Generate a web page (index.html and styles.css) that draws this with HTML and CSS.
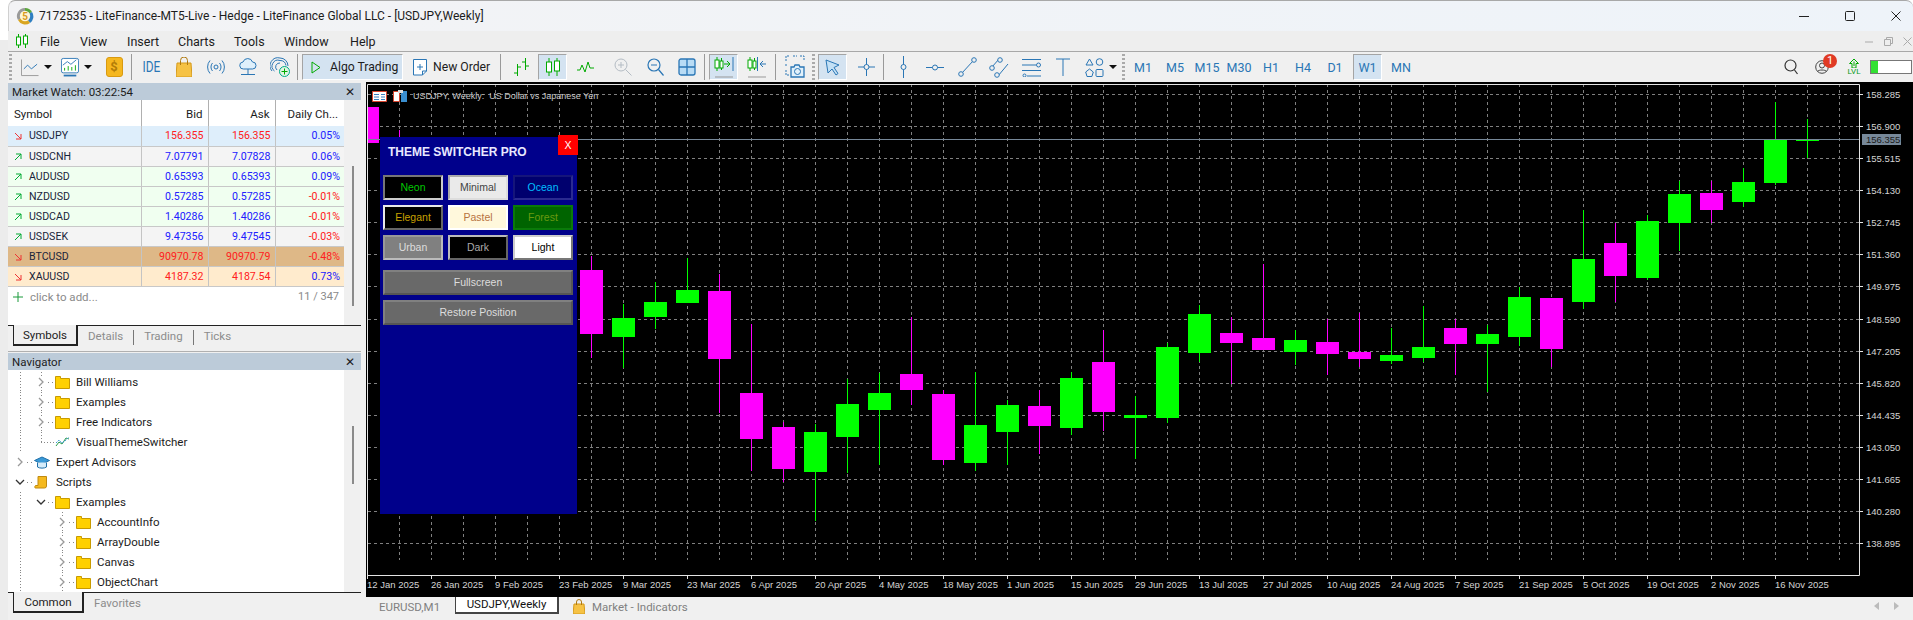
FILE: index.html
```html
<!DOCTYPE html>
<html lang="en">
<head>
    <meta charset="UTF-8">
    <meta name="viewport" content="width=device-width, initial-scale=1.0">
    <title>7172535 - LiteFinance-MT5-Live</title>
    <link rel="stylesheet" href="styles.css">
</head>
<body>
<div class="window">
    <!-- title bar -->
    <div class="titlebar">
        <svg class="logo" width="18" height="18" viewBox="0 0 18 18">
            <path d="M9 1a8 8 0 0 1 7 4L9 9z" fill="#5aa63c"/>
            <path d="M16 5a8 8 0 0 1-2 11L9 9z" fill="#2f7fc1"/>
            <path d="M14 16a8 8 0 0 1-12-3L9 9z" fill="#d9a520"/>
            <path d="M2 13A8 8 0 0 1 9 1v8z" fill="#9a9a9a"/>
            <circle cx="9" cy="9" r="5.2" fill="#fff6d8"/>
            <text x="9" y="12.5" text-anchor="middle" class="logo-five">5</text>
        </svg>
        <span class="title-text">7172535 - LiteFinance-MT5-Live - Hedge - LiteFinance Global LLC - [USDJPY,Weekly]</span>
        <div class="win-btns">
            <svg width="12" height="12" viewBox="0 0 12 12"><path d="M1 6.5h10" stroke="#222" fill="none"/></svg>
            <svg width="12" height="12" viewBox="0 0 12 12"><rect x="1.5" y="1.5" width="9" height="9" rx="1" stroke="#222" fill="none"/></svg>
            <svg width="12" height="12" viewBox="0 0 12 12"><path d="M1.5 1.5l9 9M10.5 1.5l-9 9" stroke="#222" fill="none"/></svg>
        </div>
    </div>

    <!-- menu bar -->
    <div class="menubar">
        <svg class="menu-icon" width="12" height="14" viewBox="0 0 12 14"><path d="M2.5 0v14M9.5 0v14" stroke="#0a0" fill="none"/><rect x=".5" y="3" width="4" height="8" fill="#fff" stroke="#0a0"/><rect x="7.5" y="2" width="4" height="8" fill="#fff" stroke="#0a0"/></svg>
        <span class="menu-item file">File</span>
        <span class="menu-item view">View</span>
        <span class="menu-item insert">Insert</span>
        <span class="menu-item charts">Charts</span>
        <span class="menu-item tools">Tools</span>
        <span class="menu-item win">Window</span>
        <span class="menu-item help">Help</span>
        <div class="child-btns">
            <svg width="9" height="9" viewBox="0 0 9 9"><path d="M0 5h8" stroke="#aaa" fill="none"/></svg>
            <svg width="9" height="9" viewBox="0 0 9 9"><path d="M.5 2.5h6v6h-6zM2.5 2.5v-2h6v6h-2" stroke="#aaa" fill="none"/></svg>
            <svg width="9" height="9" viewBox="0 0 9 9"><path d="M.5.5l8 8M8.5.5l-8 8" stroke="#aaa" fill="none"/></svg>
        </div>
    </div>

    <!-- toolbar -->
    <div class="toolbar">
        <div class="grip ml1"></div>
        <div class="tool dd ml8">
            <svg width="19" height="19" viewBox="0 0 19 19"><path d="M.5 1v17h18" stroke="#999" fill="none"/><path d="M3 11l4-4 4 4 6-5" stroke="#2a76b5" fill="none"/></svg>
            <i class="caret"></i>
        </div>
        <div class="tool dd ml8">
            <svg width="20" height="22" viewBox="0 0 20 22"><rect x=".5" y="1.5" width="19" height="16" rx="2" fill="#fff" stroke="#2a76b5"/><path d="M2 9l5-4 4 3 6-5" stroke="#2a76b5" fill="none"/><path d="M4 15v-3M8 15v-5M12 15v-4M16 15v-6" stroke="#0a0" fill="none"/><path d="M3 20.5h14" stroke="#2a76b5" stroke-width="2" fill="none"/></svg>
            <i class="caret"></i>
        </div>
        <div class="tool ml6">
            <div class="dollar">$</div>
        </div>
        <div class="sep ml1"></div>
        <div class="tool ml3"><span class="ide">IDE</span></div>
        <div class="tool ml1">
            <svg width="16" height="20" viewBox="0 0 16 20"><path d="M1 6h14l1 14H0z" fill="#f6c244" stroke="#d59a1c"/><path d="M4.5 8V3.5a3.5 3.5 0 0 1 7 0V8" stroke="#b07a10" fill="none"/></svg>
        </div>
        <div class="tool">
            <svg width="18" height="16" viewBox="0 0 18 16" fill="none" stroke="#2a76b5"><circle cx="9" cy="8" r="2"/><path d="M5.5 4a6 6 0 0 0 0 8M12.5 4a6 6 0 0 1 0 8M3 1.5a10 10 0 0 0 0 13M15 1.5a10 10 0 0 1 0 13"/></svg>
        </div>
        <div class="tool">
            <svg width="18" height="18" viewBox="0 0 18 18" fill="none" stroke="#2a76b5"><path d="M4.5 11a3.5 3.5 0 0 1-.5-7 5 5 0 0 1 9.5 0 3.5 3.5 0 0 1 0 7z" fill="#dff0fb"/><path d="M9 11v5M2 16.5h14"/></svg>
        </div>
        <div class="tool">
            <svg width="20" height="20" viewBox="0 0 20 20" fill="none" stroke="#2a76b5"><path d="M2 14a8 8 0 0 1 8-13 8 8 0 0 1 8 8M4.5 14a6 6 0 0 1 5.5-10.5 6 6 0 0 1 6 5M7 13a4 4 0 0 1 3-7"/><circle cx="14.5" cy="14.5" r="5" fill="#dff5e3" stroke="#0a8"/><path d="M14.5 11.5v6M11.5 14.5h6" stroke="#0a0"/></svg>
        </div>
        <div class="sep ml1"></div>
        <div class="algo ml4 active">
            <svg width="10" height="13" viewBox="0 0 10 13"><path d="M1 1l8 5.5-8 5.5z" fill="none" stroke="#0a0"/></svg>
            <span>Algo Trading</span>
        </div>
        <div class="new-order ml6">
            <svg width="14" height="18" viewBox="0 0 14 18" fill="none" stroke="#2a76b5"><path d="M.5 1.5h13V13l-4 4h-9z" fill="#fff"/><path d="M7 6v6M4 9h6"/><path d="M9.5 17v-4h4"/></svg>
            <span>New Order</span>
        </div>
        <div class="sep ml6"></div>
        <div class="tool ml4">
            <svg width="17" height="18" viewBox="0 0 17 18" fill="none" stroke="#0a0"><path d="M4.5 6v12M1 15h3.5M4.5 9H8M12.5 0v12M9 4h3.5M12.5 8H16"/></svg>
        </div>
        <div class="tool narrow ml1 active">
            <svg width="14" height="18" viewBox="0 0 14 18" fill="none" stroke="#0a0"><path d="M3 0v18M11 0v18"/><rect x=".5" y="4" width="5" height="10" fill="#fff"/><rect x="8.5" y="3" width="5" height="10" fill="#fff"/></svg>
        </div>
        <div class="tool ml2">
            <svg width="17" height="12" viewBox="0 0 17 12" fill="none" stroke="#0a0"><path d="M0 9h3l2-5 3 7 3-10 2 6h4"/></svg>
        </div>
        <div class="tool ml6">
            <svg width="18" height="18" viewBox="0 0 18 18" fill="none" stroke="#b4bcc4"><circle cx="7" cy="7" r="6"/><path d="M4 7h6M7 4v6M11.5 11.5l6 6"/></svg>
        </div>
        <div class="tool">
            <svg width="17" height="18" viewBox="0 0 17 18" fill="none" stroke="#2a76b5" stroke-width="1.2"><circle cx="7" cy="7" r="6"/><path d="M4 7h6M11.5 11.5l5 6"/></svg>
        </div>
        <div class="tool">
            <svg width="18" height="18" viewBox="0 0 18 18" fill="#b9dcf5" stroke="#2a76b5" stroke-width="1.3"><rect x="1" y="1" width="16" height="16" rx="2"/><path d="M9 1v16M1 9h16" fill="none"/></svg>
        </div>
        <div class="sep ml1"></div>
        <div class="tool narrow ml4 active">
            <svg width="20" height="24" viewBox="0 0 20 24" fill="none"><path d="M3 2v14M7.5 3v12" stroke="#0a0"/><rect x="1" y="5" width="4" height="8" fill="#fff" stroke="#0a0"/><rect x="6" y="6" width="3" height="7" fill="#fff" stroke="#0a0"/><path d="M10 9h6m-3-3l3 3-3 3" stroke="#0a0"/><path d="M19 2v14" stroke="#2a76b5"/><path d="M1 22h18" stroke="#999"/></svg>
        </div>
        <div class="tool ml3">
            <svg width="20" height="24" viewBox="0 0 20 24" fill="none"><path d="M3 2v14M7.5 3v12" stroke="#0a0"/><rect x="1" y="5" width="4" height="8" fill="#fff" stroke="#0a0"/><rect x="6" y="6" width="3" height="7" fill="#fff" stroke="#0a0"/><path d="M10.5 2v14" stroke="#2a76b5"/><path d="M19 9h-6m3-3l-3 3 3 3" stroke="#2a76b5"/><path d="M1 22h18" stroke="#999"/></svg>
        </div>
        <div class="sep ml2"></div>
        <div class="tool ml3">
            <svg width="20" height="24" viewBox="0 0 20 24" fill="none" stroke="#2a76b5"><path d="M1 6V1h4M8 1h4M15 1h4v5M1 9v3M1 15v5h4" stroke-dasharray="2 1"/><path d="M6 12h3l1-2h4l1 2h4v10H6z" fill="#e2f1fb" stroke-width="1.3"/><circle cx="12.5" cy="16.5" r="3"/></svg>
        </div>
        <div class="grip ml1"></div>
        <div class="tool narrow ml3 active">
            <svg width="15" height="17" viewBox="0 0 15 17"><path d="M1 1l13 5-5 2.5 4 6-2 1.5-4-6L3 14z" fill="#c3e0f5" stroke="#2a76b5"/></svg>
        </div>
        <div class="tool ml3">
            <svg width="17" height="18" viewBox="0 0 17 18" fill="none" stroke="#2a76b5"><path d="M8.5 0v18M0 9h17"/><circle cx="8.5" cy="9" r="2.5" fill="#f0f0f0"/></svg>
        </div>
        <div class="sep ml1"></div>
        <div class="tool ml3">
            <svg width="7" height="22" viewBox="0 0 7 22" fill="none" stroke="#2a76b5"><path d="M3.5 0v22"/><circle cx="3.5" cy="11" r="2.5" fill="#f0f0f0"/></svg>
        </div>
        <div class="tool">
            <svg width="18" height="7" viewBox="0 0 18 7" fill="none" stroke="#2a76b5"><path d="M0 3.5h18"/><circle cx="9" cy="3.5" r="2.5" fill="#f0f0f0"/></svg>
        </div>
        <div class="tool">
            <svg width="19" height="20" viewBox="0 0 19 20" fill="none" stroke="#2a76b5"><path d="M4 16L15 4"/><circle cx="3" cy="17" r="2.3" fill="#f0f0f0"/><circle cx="16" cy="3" r="2.3" fill="#f0f0f0"/></svg>
        </div>
        <div class="tool">
            <svg width="20" height="21" viewBox="0 0 20 21" fill="none" stroke="#2a76b5"><path d="M3 10L10 2M9 19l10-12"/><circle cx="3" cy="11" r="2.3" fill="#f0f0f0"/><circle cx="11" cy="3" r="2.3" fill="#f0f0f0"/><circle cx="8" cy="18" r="2.3" fill="#f0f0f0"/></svg>
        </div>
        <div class="tool">
            <svg width="19" height="19" viewBox="0 0 19 19" fill="none" stroke="#2a76b5"><path d="M0 1.5h19M0 7h14M0 12.5h19M5 18h14"/><circle cx="16.5" cy="7" r="2" fill="#f0f0f0"/><circle cx="2.5" cy="17.5" r="1.5" fill="#f0f0f0"/></svg>
        </div>
        <div class="tool">
            <svg width="14" height="18" viewBox="0 0 14 18" fill="none" stroke="#2a76b5"><path d="M0 1h14M7 1v17"/></svg>
        </div>
        <div class="tool dd wide ml3">
            <svg width="19" height="19" viewBox="0 0 19 19" fill="none" stroke="#2a76b5"><path d="M4.5 1L8 7H1z"/><circle cx="14.5" cy="4" r="3.3"/><path d="M4.5 11l3.8 3-1.4 4.5H2L.7 14z"/><rect x="11" y="11.5" width="7" height="7" rx="1"/></svg>
            <i class="caret"></i>
        </div>
        <div class="grip ml2"></div>
        <div class="tf ml2">M1</div>
        <div class="tf">M5</div>
        <div class="tf">M15</div>
        <div class="tf">M30</div>
        <div class="tf">H1</div>
        <div class="tf">H4</div>
        <div class="tf">D1</div>
        <div class="tf narrow ml2 active">W1</div>
        <div class="tf ml3">MN</div>
        <div class="tb-spacer"></div>
        <div class="tool search">
            <svg width="14" height="16" viewBox="0 0 14 16" fill="none" stroke="#333" stroke-width="1.2"><circle cx="6.5" cy="6.5" r="5.5"/><path d="M10.5 11l3 4"/></svg>
        </div>
        <div class="tool profile">
            <svg width="14" height="14" viewBox="0 0 14 14" fill="none" stroke="#444"><circle cx="7" cy="7" r="6.3"/><circle cx="7" cy="5.5" r="2.5"/><path d="M2.5 11.5c1-2 8-2 9 0"/></svg>
            <span class="badge">1</span>
        </div>
        <div class="tool lvl">
            <svg width="10" height="9" viewBox="0 0 10 9"><path d="M5 0l4.5 4.5H7V9H3V4.5H.5z" fill="none" stroke="#0a0"/><path d="M5 2.5V7" stroke="#0a0"/></svg>
            <span>LVL</span>
        </div>
        <div class="signal-bar"><i></i></div>
    </div>

    <div class="main">
        <!-- left docks -->
        <div class="sidebar">
            <div class="dock watch">
                <div class="dock-head"><span>Market Watch: 03:22:54</span><b class="dock-x">✕</b></div>
                <div class="dock-body">
                    <div class="dock-content">
                        <table class="quotes">
                            <thead>
                                <tr><th class="sym">Symbol</th><th>Bid</th><th>Ask</th><th class="chg">Daily Ch...</th></tr>
                            </thead>
                            <tbody>
                                <tr class="row-sel"><td class="sym"><svg class="arr" width="8" height="8" viewBox="0 0 8 8"><path d="M1 1l6 6M7 2v5H2" stroke="#e33" fill="none"/></svg>USDJPY</td><td class="dn">156.355</td><td class="dn">156.355</td><td class="up">0.05%</td></tr>
                                <tr class="row-grey"><td class="sym"><svg class="arr" width="8" height="8" viewBox="0 0 8 8"><path d="M1 7l6-6M2 1h5v5" stroke="#0a3" fill="none"/></svg>USDCNH</td><td class="up">7.07791</td><td class="up">7.07828</td><td class="up">0.06%</td></tr>
                                <tr class="row-green"><td class="sym"><svg class="arr" width="8" height="8" viewBox="0 0 8 8"><path d="M1 7l6-6M2 1h5v5" stroke="#0a3" fill="none"/></svg>AUDUSD</td><td class="up">0.65393</td><td class="up">0.65393</td><td class="up">0.09%</td></tr>
                                <tr class="row-green"><td class="sym"><svg class="arr" width="8" height="8" viewBox="0 0 8 8"><path d="M1 7l6-6M2 1h5v5" stroke="#0a3" fill="none"/></svg>NZDUSD</td><td class="up">0.57285</td><td class="up">0.57285</td><td class="dn">-0.01%</td></tr>
                                <tr class="row-green"><td class="sym"><svg class="arr" width="8" height="8" viewBox="0 0 8 8"><path d="M1 7l6-6M2 1h5v5" stroke="#0a3" fill="none"/></svg>USDCAD</td><td class="up">1.40286</td><td class="up">1.40286</td><td class="dn">-0.01%</td></tr>
                                <tr class="row-grey"><td class="sym"><svg class="arr" width="8" height="8" viewBox="0 0 8 8"><path d="M1 7l6-6M2 1h5v5" stroke="#0a3" fill="none"/></svg>USDSEK</td><td class="up">9.47356</td><td class="up">9.47545</td><td class="dn">-0.03%</td></tr>
                                <tr class="row-btc"><td class="sym"><svg class="arr" width="8" height="8" viewBox="0 0 8 8"><path d="M1 1l6 6M7 2v5H2" stroke="#e33" fill="none"/></svg>BTCUSD</td><td class="dn">90970.78</td><td class="dn">90970.79</td><td class="dn">-0.48%</td></tr>
                                <tr class="row-gold"><td class="sym"><svg class="arr" width="8" height="8" viewBox="0 0 8 8"><path d="M1 1l6 6M7 2v5H2" stroke="#e33" fill="none"/></svg>XAUUSD</td><td class="dn">4187.32</td><td class="dn">4187.54</td><td class="up">0.73%</td></tr>
                            </tbody>
                        </table>
                        <div class="add-row">
                            <svg width="10" height="10" viewBox="0 0 10 10"><path d="M5 0v10M0 5h10" stroke="#1a9a3a" fill="none"/></svg>
                            <span class="add-text">click to add...</span>
                            <span class="add-count">11 / 347</span>
                        </div>
                    </div>
                    <div class="gutter watch-gutter"><i></i></div>
                </div>
                <div class="dock-tabs">
                    <span class="dock-tab symbols">Symbols</span>
                    <span class="tab-off">Details</span><u></u>
                    <span class="tab-off">Trading</span><u></u>
                    <span class="tab-off">Ticks</span>
                </div>
            </div>

            <div class="dock nav">
                <div class="dock-head"><span>Navigator</span><b class="dock-x">✕</b></div>
                <div class="dock-body">
                    <div class="dock-content tree">
                        <div class="tree-row lvl2 g-ab"><svg class="chev" width="10" height="10" viewBox="0 0 10 10"><path d="M3 1l4 4-4 4" fill="none" stroke="#999" stroke-width="1.3"/></svg><i class="dots"></i><svg class="folder" width="15" height="13" viewBox="0 0 15 13"><path d="M.5 12.5V.5h5v2h9v10z" fill="#ffd000" stroke="#c89a00"/></svg><span>Bill Williams</span></div>
                        <div class="tree-row lvl2 g-ab"><svg class="chev" width="10" height="10" viewBox="0 0 10 10"><path d="M3 1l4 4-4 4" fill="none" stroke="#999" stroke-width="1.3"/></svg><i class="dots"></i><svg class="folder" width="15" height="13" viewBox="0 0 15 13"><path d="M.5 12.5V.5h5v2h9v10z" fill="#ffd000" stroke="#c89a00"/></svg><span>Examples</span></div>
                        <div class="tree-row lvl2 g-ab"><svg class="chev" width="10" height="10" viewBox="0 0 10 10"><path d="M3 1l4 4-4 4" fill="none" stroke="#999" stroke-width="1.3"/></svg><i class="dots"></i><svg class="folder" width="15" height="13" viewBox="0 0 15 13"><path d="M.5 12.5V.5h5v2h9v10z" fill="#ffd000" stroke="#c89a00"/></svg><span>Free Indicators</span></div>
                        <div class="tree-row lvl2 g-leaf"><i class="leaf-line"></i><svg class="folder" width="15" height="12" viewBox="0 0 15 12" fill="none"><path d="M1 10l3-4 3 2 4-6 3 1" stroke="#2a9a4a"/><path d="M1 7l3-3 3 3 4-3 3-3" stroke="#3a9ad8" stroke-dasharray="2 1"/></svg><span>VisualThemeSwitcher</span></div>
                        <div class="tree-row lvl1"><svg class="chev" width="10" height="10" viewBox="0 0 10 10"><path d="M3 1l4 4-4 4" fill="none" stroke="#999" stroke-width="1.3"/></svg><i class="dots"></i><svg class="folder" width="16" height="13" viewBox="0 0 16 13"><path d="M8 1L.5 4.5 8 8l7.5-3.5z" fill="#3a9ad8" stroke="#1f6fa8"/><path d="M3.5 6.5V11c2 1.5 7 1.5 9 0V6.5" fill="#d5ecfa" stroke="#1f6fa8"/></svg><span>Expert Advisors</span></div>
                        <div class="tree-row lvl1"><svg class="chev" width="10" height="10" viewBox="0 0 10 10"><path d="M1 3l4 4 4-4" fill="none" stroke="#333" stroke-width="1.3"/></svg><i class="dots"></i><svg class="folder" width="16" height="13" viewBox="0 0 16 13"><path d="M4 .5h8.500V10a2 2 0 0 1-2 2h-9c-1 0-1-1.500 0-2.500H4z" fill="#f5b91e" stroke="#c08a10"/></svg><span>Scripts</span></div>
                        <div class="tree-row lvl2 g-a"><svg class="chev" width="10" height="10" viewBox="0 0 10 10"><path d="M1 3l4 4 4-4" fill="none" stroke="#333" stroke-width="1.3"/></svg><i class="dots"></i><svg class="folder" width="15" height="13" viewBox="0 0 15 13"><path d="M.5 12.5V.5h5v2h9v10z" fill="#ffd000" stroke="#c89a00"/></svg><span>Examples</span></div>
                        <div class="tree-row lvl3 g-ac"><svg class="chev" width="10" height="10" viewBox="0 0 10 10"><path d="M3 1l4 4-4 4" fill="none" stroke="#999" stroke-width="1.3"/></svg><i class="dots"></i><svg class="folder" width="15" height="13" viewBox="0 0 15 13"><path d="M.5 12.5V.5h5v2h9v10z" fill="#ffd000" stroke="#c89a00"/></svg><span>AccountInfo</span></div>
                        <div class="tree-row lvl3 g-ac"><svg class="chev" width="10" height="10" viewBox="0 0 10 10"><path d="M3 1l4 4-4 4" fill="none" stroke="#999" stroke-width="1.3"/></svg><i class="dots"></i><svg class="folder" width="15" height="13" viewBox="0 0 15 13"><path d="M.5 12.5V.5h5v2h9v10z" fill="#ffd000" stroke="#c89a00"/></svg><span>ArrayDouble</span></div>
                        <div class="tree-row lvl3 g-ac"><svg class="chev" width="10" height="10" viewBox="0 0 10 10"><path d="M3 1l4 4-4 4" fill="none" stroke="#999" stroke-width="1.3"/></svg><i class="dots"></i><svg class="folder" width="15" height="13" viewBox="0 0 15 13"><path d="M.5 12.5V.5h5v2h9v10z" fill="#ffd000" stroke="#c89a00"/></svg><span>Canvas</span></div>
                        <div class="tree-row lvl3 g-ac"><svg class="chev" width="10" height="10" viewBox="0 0 10 10"><path d="M3 1l4 4-4 4" fill="none" stroke="#999" stroke-width="1.3"/></svg><i class="dots"></i><svg class="folder" width="15" height="13" viewBox="0 0 15 13"><path d="M.5 12.5V.5h5v2h9v10z" fill="#ffd000" stroke="#c89a00"/></svg><span>ObjectChart</span></div>
                    </div>
                    <div class="gutter nav-gutter"><i></i></div>
                </div>
                <div class="dock-tabs">
                    <span class="dock-tab common">Common</span>
                    <span class="tab-off">Favorites</span>
                </div>
            </div>
        </div>

        <!-- chart and its tabs -->
        <div class="chart-col">
            <div class="chart-wrap">
                <svg class="chart" width="1547" height="515" viewBox="366 82 1547 515">
                    <defs>
                        <pattern id="vgrid" x="399" y="84" width="32" height="6" patternUnits="userSpaceOnUse">
                            <rect width="1" height="3" fill="#808080"/>
                        </pattern>
                    </defs>
                    <rect x="399" y="85" width="1441" height="475" fill="url(#vgrid)"/>
                    <path class="hgrid" d="M368 94.5H1863M368 126.5H1863M368 158.5H1863M368 190.5H1863M368 222.5H1863M368 254.5H1863M368 286.5H1863M368 319.5H1863M368 351.5H1863M368 383.5H1863M368 415.5H1863M368 447.5H1863M368 479.5H1863M368 511.5H1863M368 543.5H1863"/>
                    <path class="hticks" d="M1859 94.5h4M1859 126.5h4M1859 158.5h4M1859 190.5h4M1859 222.5h4M1859 254.5h4M1859 286.5h4M1859 319.5h4M1859 351.5h4M1859 383.5h4M1859 415.5h4M1859 447.5h4M1859 479.5h4M1859 511.5h4M1859 543.5h4"/>

                    <path class="wick-m" d="M399.5 130V137M591.5 256V358M719.5 274V413M751.5 324V471M783.5 422V482M911.5 317V405M943.5 390V465M1039.5 390V454M1103.5 330V431M1231.5 317V384M1263.5 264V350M1327.5 319V375M1359.5 313V367M1455.5 319V375M1551.5 298V367M1615.5 223V302M1711.5 181V223"/>
                    <path class="wick-g" d="M623.5 304V368M655.5 282V329M687.5 258V303M815.5 424V521M847.5 379V473M879.5 373V465M975.5 372V471M1007.5 400V465M1071.5 372V435M1135.5 396V459M1167.5 343V423M1199.5 305V362M1295.5 330V365M1391.5 328V364M1423.5 306V362M1487.5 325V392M1519.5 287V346M1583.5 210V309M1647.5 215V280M1679.5 181V251M1743.5 168V207M1775.5 102V185M1807.5 119V158"/>
                    <path class="body-m" d="M368 107h11v36h-11zM580 270h23v64h-23zM708 291h23v68h-23zM740 393h23v46h-23zM772 427h23v42h-23zM900 374h23v16h-23zM932 394h23v66h-23zM1028 406h23v20h-23zM1092 362h23v50h-23zM1220 333h23v10h-23zM1252 338h23v12h-23zM1316 342h23v12h-23zM1348 352h23v7h-23zM1444 328h23v16h-23zM1540 298h23v51h-23zM1604 243h23v33h-23zM1700 193h23v17h-23z"/>
                    <path class="body-g" d="M612 318h23v19h-23zM644 302h23v15h-23zM676 290h23v13h-23zM804 432h23v40h-23zM836 404h23v33h-23zM868 393h23v17h-23zM964 425h23v38h-23zM996 405h23v27h-23zM1060 378h23v50h-23zM1124 415h23v3h-23zM1156 347h23v71h-23zM1188 314h23v39h-23zM1284 340h23v12h-23zM1380 355h23v6h-23zM1412 347h23v11h-23zM1476 334h23v10h-23zM1508 297h23v40h-23zM1572 259h23v43h-23zM1636 221h23v57h-23zM1668 194h23v29h-23zM1732 182h23v20h-23zM1764 139h23v44h-23zM1796 139h23v2h-23z"/>

                    <path class="price-line" d="M368 139.5H1859"/>
                    <path class="frame" d="M367.5 84.5H1859.5V575.5H367.5z"/>
                    <path class="xticks" d="M367.5 575v4M431.5 575v4M495.5 575v4M559.5 575v4M623.5 575v4M687.5 575v4M751.5 575v4M815.5 575v4M879.5 575v4M943.5 575v4M1007.5 575v4M1071.5 575v4M1135.5 575v4M1199.5 575v4M1263.5 575v4M1327.5 575v4M1391.5 575v4M1455.5 575v4M1519.5 575v4M1583.5 575v4M1647.5 575v4M1711.5 575v4M1775.5 575v4"/>

                    <g class="axis">
                        <text x="1866" y="97.5">158.285</text>
                        <text x="1866" y="129.5">156.900</text>
                        <text x="1866" y="161.5">155.515</text>
                        <text x="1866" y="193.5">154.130</text>
                        <text x="1866" y="225.5">152.745</text>
                        <text x="1866" y="257.5">151.360</text>
                        <text x="1866" y="289.5">149.975</text>
                        <text x="1866" y="322.5">148.590</text>
                        <text x="1866" y="354.5">147.205</text>
                        <text x="1866" y="386.5">145.820</text>
                        <text x="1866" y="418.5">144.435</text>
                        <text x="1866" y="450.5">143.050</text>
                        <text x="1866" y="482.5">141.665</text>
                        <text x="1866" y="514.5">140.280</text>
                        <text x="1866" y="546.5">138.895</text>
                        <text x="367" y="588">12 Jan 2025</text>
                        <text x="431" y="588">26 Jan 2025</text>
                        <text x="495" y="588">9 Feb 2025</text>
                        <text x="559" y="588">23 Feb 2025</text>
                        <text x="623" y="588">9 Mar 2025</text>
                        <text x="687" y="588">23 Mar 2025</text>
                        <text x="751" y="588">6 Apr 2025</text>
                        <text x="815" y="588">20 Apr 2025</text>
                        <text x="879" y="588">4 May 2025</text>
                        <text x="943" y="588">18 May 2025</text>
                        <text x="1007" y="588">1 Jun 2025</text>
                        <text x="1071" y="588">15 Jun 2025</text>
                        <text x="1135" y="588">29 Jun 2025</text>
                        <text x="1199" y="588">13 Jul 2025</text>
                        <text x="1263" y="588">27 Jul 2025</text>
                        <text x="1327" y="588">10 Aug 2025</text>
                        <text x="1391" y="588">24 Aug 2025</text>
                        <text x="1455" y="588">7 Sep 2025</text>
                        <text x="1519" y="588">21 Sep 2025</text>
                        <text x="1583" y="588">5 Oct 2025</text>
                        <text x="1647" y="588">19 Oct 2025</text>
                        <text x="1711" y="588">2 Nov 2025</text>
                        <text x="1775" y="588">16 Nov 2025</text>
                    </g>
                    <rect x="1862" y="134" width="39" height="11" fill="#778899"/>
                    <text x="1866" y="143" class="price-tag">156.355</text>

                    <!-- one-click and object icons next to the chart caption -->
                    <path d="M372.5 91.5h14v10h-14z" fill="#fff" stroke="#d8452e"/>
                    <path d="M374 94.5h5M374 97h5M374 99.5h5M381 94.5h4M381 97h4M381 99.5h4" stroke="#3a7fc0"/>
                    <path d="M393.5 91.5h6v10h-6z" fill="#fff" stroke="#d8452e"/>
                    <path d="M401 91h6v11h-6z" fill="#3a8fd0"/>
                    <path d="M398 90h5v3h-5z" fill="#ddd"/>
                    <text x="413" y="99" class="caption">USDJPY, Weekly:&#160;&#160;US Dollar vs Japanese Yen</text>
                </svg>

                <!-- expert panel drawn over the chart -->
                <div class="theme-panel">
                    <div class="panel-title">THEME SWITCHER PRO</div>
                    <button class="panel-close">X</button>
                    <div class="theme-grid">
                        <button class="theme neon">Neon</button>
                        <button class="theme minimal">Minimal</button>
                        <button class="theme ocean">Ocean</button>
                        <button class="theme elegant">Elegant</button>
                        <button class="theme pastel">Pastel</button>
                        <button class="theme forest">Forest</button>
                        <button class="theme urban">Urban</button>
                        <button class="theme dark">Dark</button>
                        <button class="theme light">Light</button>
                    </div>
                    <button class="theme wide-btn first">Fullscreen</button>
                    <button class="theme wide-btn">Restore Position</button>
                </div>
            </div>

            <div class="chart-tabs">
                <span class="ctab eur">EURUSD,M1</span>
                <span class="ctab current">USDJPY,Weekly</span>
                <svg class="market-bag" width="12" height="15" viewBox="0 0 12 15"><path d="M1 5h10l1 10H0z" fill="#f6c244" stroke="#d59a1c"/><path d="M3.5 6V3a2.5 2.5 0 0 1 5 0v3" stroke="#b07a10" fill="none"/></svg>
                <span class="ctab market">Market - Indicators</span>
                <div class="tab-arrows">
                    <svg width="5" height="8" viewBox="0 0 5 8"><path d="M5 0v8L0 4z" fill="#bbb"/></svg>
                    <svg width="5" height="8" viewBox="0 0 5 8"><path d="M0 0v8l5-4z" fill="#bbb"/></svg>
                </div>
            </div>
        </div>
    </div>
</div>
</body>
</html>
```

FILE: styles.css
```css
* {
    box-sizing: border-box;
}

body {
    margin: 0;
    background: linear-gradient(to bottom, #ffffff 40px, #ececec 40px);
    font-family: 'Roboto', 'Liberation Sans', sans-serif;
    color: #1c1c1c;
    overflow: hidden;
}

.window {
    width: 1913px;
    height: 620px;
    padding-left: 8px;
    display: flex;
    flex-direction: column;
}

/* title bar */
.titlebar {
    height: 31px;
    flex: none;
    display: flex;
    align-items: center;
    border-top: 1px solid #a8a8a8;
    border-left: 1px solid #d0d0d0;
    border-radius: 7px 7px 0 0;
    background: linear-gradient(to right, #f3f3f5, #eef3f9);
    padding-left: 7px;
}

.logo {
    margin-right: 5px;
}

.logo-five {
    font-size: 10px;
    font-weight: bold;
    fill: #d89a20;
}

.title-text {
    font-size: 12px;
}

.win-btns {
    margin-left: auto;
    display: flex;
    gap: 34px;
    padding-right: 11px;
}

/* menu bar */
.menubar {
    height: 20px;
    flex: none;
    display: flex;
    align-items: center;
    background-color: #eeeeee;
    padding-left: 8px;
    font-size: 12.5px;
}

.menu-icon {
    flex: none;
    margin-right: 12px;
}

.menu-item.file { width: 40px; }
.menu-item.view { width: 47px; }
.menu-item.insert { width: 51px; }
.menu-item.charts { width: 56px; }
.menu-item.tools { width: 50px; }
.menu-item.win { width: 66px; }

.child-btns {
    margin-left: auto;
    display: flex;
    gap: 10px;
    padding-right: 1px;
}

/* toolbar */
.toolbar {
    height: 31px;
    flex: none;
    display: flex;
    align-items: center;
    border-top: 1px solid #a8a8a8;
    background-color: #f0f0f0;
    font-size: 12.2px;
}

.ml1 { margin-left: 1px; }
.ml2 { margin-left: 2px; }
.ml3 { margin-left: 3px; }
.ml4 { margin-left: 4px; }
.ml6 { margin-left: 6px; }
.ml8 { margin-left: 8px; }

.grip {
    width: 3px;
    height: 26px;
    flex: none;
    background: repeating-linear-gradient(to bottom, #aaa 0 2px, transparent 2px 4px);
}

.sep {
    width: 1px;
    height: 26px;
    flex: none;
    background-color: #999;
}

.tool {
    width: 32px;
    height: 26px;
    flex: none;
    display: flex;
    align-items: center;
    justify-content: center;
}

.tool.narrow {
    width: 29px;
}

.tool.dd {
    justify-content: flex-start;
    gap: 5px;
    padding-left: 1px;
}

.tool.wide {
    width: 38px;
    padding-left: 3px;
}

.caret {
    width: 0;
    height: 0;
    border-left: 4px solid transparent;
    border-right: 4px solid transparent;
    border-top: 4px solid #111;
}

.active {
    background-color: #d4e3f1;
    border-top: 1px solid #a4a4a4;
    border-left: 1px solid #a4a4a4;
    border-right: 1px solid #fff;
    border-bottom: 1px solid #fff;
}

.dollar {
    width: 17px;
    height: 20px;
    border-radius: 3px;
    background-color: #f5b71f;
    border: 1px solid #d99a10;
    color: #b27c08;
    font-size: 13px;
    font-weight: bold;
    text-align: center;
    line-height: 18px;
}

.ide {
    color: #2a76b5;
    font-size: 14px;
    transform: scaleX(.85);
}

.algo {
    width: 101px;
    height: 26px;
    flex: none;
    display: flex;
    align-items: center;
    gap: 9px;
    padding-left: 8px;
}

.new-order {
    width: 85px;
    flex: none;
    display: flex;
    align-items: center;
    gap: 6px;
    padding-left: 4px;
}

.tf {
    width: 32px;
    height: 26px;
    flex: none;
    display: flex;
    align-items: center;
    justify-content: center;
    color: #2a76b5;
    font-size: 12.5px;
}

.tf.narrow {
    width: 29px;
}

.tb-spacer {
    flex: 1;
}

.search {
    width: 31px;
}

.profile {
    position: relative;
}

.badge {
    position: absolute;
    left: 17px;
    top: 0;
    width: 14px;
    height: 14px;
    border-radius: 50%;
    background-color: #e03a24;
    color: white;
    font-size: 11px;
    line-height: 14px;
    text-align: center;
}

.lvl {
    flex-direction: column;
    color: #0a9a1a;
    font-size: 8px;
    line-height: 8px;
}

.signal-bar {
    width: 42px;
    height: 14px;
    margin-right: 1px;
    flex: none;
    border: 1px solid #777;
    background-color: white;
}

.signal-bar i {
    display: block;
    width: 7px;
    height: 100%;
    background-color: #33e033;
}

/* main area */
.main {
    flex: 1;
    display: flex;
    min-height: 0;
    background-color: #f0f0f0;
}

.sidebar {
    width: 353px;
    flex: none;
    display: flex;
    flex-direction: column;
}

.dock.watch {
    height: 269px;
    flex: none;
    display: flex;
    flex-direction: column;
}

.dock.nav {
    flex: 1;
    min-height: 0;
    display: flex;
    flex-direction: column;
    border-top: 1px solid #b0b0b0;
}

.dock-head {
    height: 17px;
    flex: none;
    margin-top: 1px;
    display: flex;
    align-items: center;
    justify-content: space-between;
    padding: 0 4px;
    background-color: #bccbd9;
    font-size: 11.5px;
}

.dock-x {
    font-size: 12px;
    font-weight: normal;
    margin-right: 2px;
}

.dock-body {
    flex: 1;
    min-height: 0;
    display: flex;
}

.dock-content {
    width: 336px;
    flex: none;
    background-color: white;
}

.gutter {
    flex: 1;
    padding-left: 8px;
}

.gutter i {
    display: block;
    width: 2px;
    background-color: #8a8a8a;
}

.watch-gutter i {
    height: 140px;
    margin-top: 66px;
}

.nav-gutter i {
    height: 58px;
    margin-top: 56px;
}

/* market watch table */
.quotes {
    width: 336px;
    border-collapse: collapse;
    table-layout: fixed;
    font-size: 10.6px;
}

.quotes th {
    height: 26px;
    padding: 2px 5px 0 0;
    text-align: right;
    font-weight: normal;
    border-right: 1px solid #b0b0b0;
    font-size: 11.5px;
}

.quotes th:nth-child(1) { width: 133px; }
.quotes th:nth-child(2) { width: 67px; }
.quotes th:nth-child(3) { width: 67px; }

.quotes th:last-child {
    border-right: none;
}

.quotes th.sym {
    text-align: left;
    padding-left: 6px;
}

.quotes th.chg {
    padding-right: 6px;
}

.quotes td {
    height: 20px;
    padding: 0 4px 0 0;
    text-align: right;
    border-right: 1px solid #c4c4c4;
    border-bottom: 1px solid #c8c8c8;
}

.quotes td:last-child {
    border-right: none;
}

.quotes td.sym {
    text-align: left;
    padding-left: 6px;
    color: #18243a;
}

.arr {
    margin-right: 7px;
    vertical-align: -1px;
}

.up { color: #2020ff; }
.dn { color: #ff2020; }

.row-sel { background-color: #deeefb; }
.row-grey { background-color: #f4f4f4; }
.row-green { background-color: #f0fff0; }
.row-btc { background-color: #deb887; }
.row-gold { background-color: #ffebcd; }

.add-row {
    height: 20px;
    display: flex;
    align-items: center;
    padding: 0 5px;
    font-size: 11.5px;
    color: #8a8a8a;
}

.add-text {
    margin-left: 7px;
}

.add-count {
    margin-left: auto;
    font-size: 11px;
}

/* dock tabs */
.dock-tabs {
    height: 26px;
    flex: none;
    display: flex;
    align-items: flex-start;
    border-top: 1px solid #222;
    font-size: 11.5px;
    color: #8c8c8c;
    padding-left: 5px;
}

.nav .dock-tabs {
    height: 28px;
}

.dock-tab {
    height: 21px;
    margin-top: -1px;
    display: flex;
    align-items: center;
    justify-content: center;
    color: #1c1c1c;
    background-color: #f0f0f0;
    border-left: 1px solid #222;
    border-right: 2px solid #222;
    border-bottom: 2px solid #222;
}

.dock-tab.symbols { width: 65px; }
.dock-tab.common { width: 71px; }

.tab-off {
    padding: 3px 10px 0;
}

.dock-tabs u {
    width: 1px;
    height: 15px;
    margin-top: 4px;
    background-color: #777;
}

/* navigator tree */
.tree {
    padding-top: 2px;
    overflow: hidden;
    font-size: 11.5px;
}

.tree-row {
    height: 20px;
    display: flex;
    align-items: center;
    background-repeat: no-repeat;
}

.tree-row.lvl1 { padding-left: 7px; }
.tree-row.lvl2 { padding-left: 28px; }
.tree-row.lvl3 { padding-left: 49px; }

.g-a {
    background-image: repeating-linear-gradient(to bottom, #888 0 1px, transparent 1px 3px);
    background-size: 1px 100%;
    background-position: 12px 0;
}

.g-ab {
    background-image: repeating-linear-gradient(to bottom, #888 0 1px, transparent 1px 3px), repeating-linear-gradient(to bottom, #888 0 1px, transparent 1px 3px);
    background-size: 1px 100%, 1px 100%;
    background-position: 12px 0, 33px 0;
}

.g-ac {
    background-image: repeating-linear-gradient(to bottom, #888 0 1px, transparent 1px 3px), repeating-linear-gradient(to bottom, #888 0 1px, transparent 1px 3px);
    background-size: 1px 100%, 1px 100%;
    background-position: 12px 0, 54px 0;
}

.g-leaf {
    background-image: repeating-linear-gradient(to bottom, #888 0 1px, transparent 1px 3px), repeating-linear-gradient(to bottom, #888 0 1px, transparent 1px 3px);
    background-size: 1px 100%, 1px 50%;
    background-position: 12px 0, 33px 0;
}

.chev {
    flex: none;
    background-color: white;
}

.dots {
    width: 9px;
    height: 1px;
    flex: none;
    background: repeating-linear-gradient(to right, transparent 0 2px, #888 2px 3px, transparent 3px 4px);
}

.leaf-line {
    width: 19px;
    height: 1px;
    margin-left: 5px;
    margin-right: -5px;
    flex: none;
    background: repeating-linear-gradient(to right, #888 0 1px, transparent 1px 3px);
}

.folder {
    flex: none;
    margin-right: 6px;
}

/* chart */
.chart-col {
    width: 1552px;
    flex: none;
    display: flex;
    flex-direction: column;
    padding-left: 5px;
}

.chart-wrap {
    height: 515px;
    flex: none;
    position: relative;
    background-color: black;
}

.chart {
    display: block;
}

.hgrid {
    stroke: #808080;
    stroke-dasharray: 3 3;
    fill: none;
}

.hticks,
.xticks,
.frame {
    stroke: #e4e4e4;
    fill: none;
}

.wick-g { stroke: #00ff00; fill: none; }
.wick-m { stroke: #ff00ff; fill: none; }
.body-g { fill: #00ff00; }
.body-m { fill: #ff00ff; }

.price-line {
    stroke: #778899;
    fill: none;
}

.axis text {
    font-family: 'Liberation Sans', sans-serif;
    font-size: 9.5px;
    fill: #d4d4d4;
}

.price-tag {
    font-family: 'Liberation Sans', sans-serif;
    font-size: 9.5px;
    fill: #1a1a1a;
}

.caption {
    font-family: 'Liberation Sans', sans-serif;
    font-size: 9px;
    fill: #c8c8c8;
}

/* theme panel over the chart */
.theme-panel {
    position: absolute;
    left: 14px;
    top: 55px;
    width: 197px;
    height: 377px;
    padding: 8px 3px 0;
    background-color: #00008b;
    font-family: 'Liberation Sans', sans-serif;
}

.panel-title {
    height: 30px;
    padding-left: 5px;
    color: #e8e8ff;
    font-size: 12px;
    font-weight: bold;
}

.panel-close {
    position: absolute;
    right: -1px;
    top: -2px;
    width: 20px;
    height: 20px;
    padding: 0;
    border: none;
    background-color: #ff0000;
    color: white;
    font-family: inherit;
    font-size: 10.5px;
}

.theme-grid {
    display: grid;
    grid-template-columns: repeat(3, 60px);
    grid-auto-rows: 25px;
    gap: 5px;
}

.theme {
    padding: 0 0 2px;
    border-width: 2px;
    border-style: solid;
    font-family: inherit;
    font-size: 10.5px;
}

.neon { background: #000; color: #00c800; border-color: #777 #ccc #ccc #777; }
.minimal { background: #eaeaea; color: #444; border-color: #aaa #ddd #ddd #aaa; }
.ocean { background: #00006e; color: #00bfff; border-color: #15157a #2a2a90 #2a2a90 #15157a; }
.elegant { background: #000; color: #c8a000; border-color: #e8e8e8 #666 #666 #e8e8e8; }
.pastel { background: #fff8dc; color: #b8733f; border-color: #fff; }
.forest { background: #006400; color: #6b9a10; border-color: #0a7a0a; }
.urban { background: #808080; color: #ddd; border-color: #999 #bbb #bbb #999; }
.dark { background: #000; color: #aaa; border-color: #bbb #666 #666 #bbb; }
.light { background: #fff; color: #000; border-color: #ccc #777 #777 #ccc; }

.wide-btn {
    display: block;
    width: 190px;
    height: 25px;
    margin-top: 5px;
    background: #696969;
    color: #ddd;
    border-color: #808080 #555 #555 #808080;
}

.wide-btn.first {
    margin-top: 10px;
}

/* chart tabs */
.chart-tabs {
    flex: 1;
    display: flex;
    align-items: flex-start;
    font-size: 11.5px;
    color: #808080;
    padding-left: 13px;
}

.ctab.eur {
    width: 76px;
    padding-top: 3px;
}

.ctab.current {
    width: 104px;
    height: 18px;
    margin-top: -1px;
    display: flex;
    align-items: center;
    justify-content: center;
    background-color: white;
    color: #111;
    border-right: 2px solid #444;
    border-bottom: 2px solid #444;
    border-left: 1px solid #444;
}

.market-bag {
    margin: 2px 7px 0 14px;
}

.ctab.market {
    padding-top: 3px;
}

.tab-arrows {
    margin-left: auto;
    display: flex;
    gap: 15px;
    padding: 5px 14px 0 0;
}
```
